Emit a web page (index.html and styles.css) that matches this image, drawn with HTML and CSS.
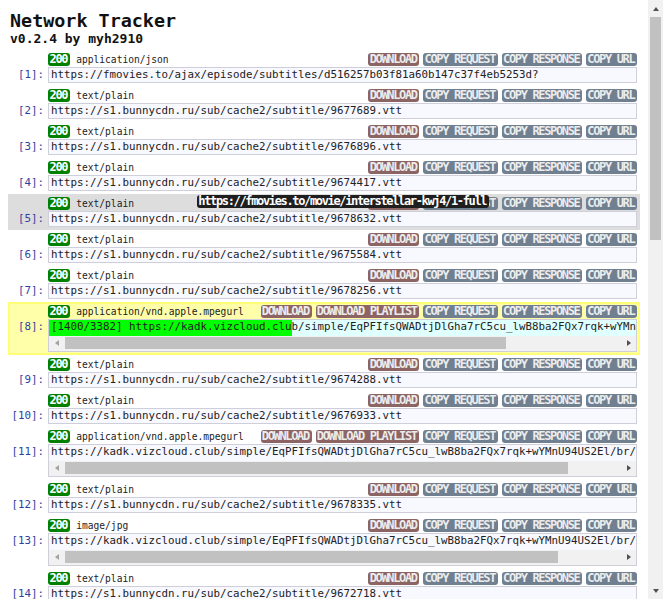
FILE: index.html
```html
<!DOCTYPE html>
<html>
<head>
<meta charset="utf-8">
<title>Network Tracker</title>
<link rel="stylesheet" href="styles.css">
</head>
<body>
<div class="page">
<h1 class="title">Network Tracker</h1>
<div class="ver">v0.2.4 by myh2910</div>
<div class="list">

<div class="row">
  <div class="head"><span class="badge">200</span><span class="type">application/json</span><span class="actions"><span class="btn dl">DOWNLOAD</span><span class="btn cp">COPY REQUEST</span><span class="btn cp">COPY RESPONSE</span><span class="btn cp">COPY URL</span></span></div>
  <div class="idx">[1]:</div>
  <div class="url">https://fmovies.to/ajax/episode/subtitles/d516257b03f81a60b147c37f4eb5253d?</div>
</div>

<div class="row">
  <div class="head"><span class="badge">200</span><span class="type">text/plain</span><span class="actions"><span class="btn dl">DOWNLOAD</span><span class="btn cp">COPY REQUEST</span><span class="btn cp">COPY RESPONSE</span><span class="btn cp">COPY URL</span></span></div>
  <div class="idx">[2]:</div>
  <div class="url">https://s1.bunnycdn.ru/sub/cache2/subtitle/9677689.vtt</div>
</div>

<div class="row">
  <div class="head"><span class="badge">200</span><span class="type">text/plain</span><span class="actions"><span class="btn dl">DOWNLOAD</span><span class="btn cp">COPY REQUEST</span><span class="btn cp">COPY RESPONSE</span><span class="btn cp">COPY URL</span></span></div>
  <div class="idx">[3]:</div>
  <div class="url">https://s1.bunnycdn.ru/sub/cache2/subtitle/9676896.vtt</div>
</div>

<div class="row">
  <div class="head"><span class="badge">200</span><span class="type">text/plain</span><span class="actions"><span class="btn dl">DOWNLOAD</span><span class="btn cp">COPY REQUEST</span><span class="btn cp">COPY RESPONSE</span><span class="btn cp">COPY URL</span></span></div>
  <div class="idx">[4]:</div>
  <div class="url">https://s1.bunnycdn.ru/sub/cache2/subtitle/9674417.vtt</div>
</div>

<div class="row hover">
  <div class="head"><span class="badge">200</span><span class="type">text/plain</span><span class="actions"><span class="btn dl">DOWNLOAD</span><span class="btn cp">COPY REQUEST</span><span class="btn cp">COPY RESPONSE</span><span class="btn cp">COPY URL</span></span></div>
  <div class="idx">[5]:</div>
  <div class="url">https://s1.bunnycdn.ru/sub/cache2/subtitle/9678632.vtt</div>
  <div class="tip">https://fmovies.to/movie/interstellar-kwj4/1-full</div>
</div>

<div class="row">
  <div class="head"><span class="badge">200</span><span class="type">text/plain</span><span class="actions"><span class="btn dl">DOWNLOAD</span><span class="btn cp">COPY REQUEST</span><span class="btn cp">COPY RESPONSE</span><span class="btn cp">COPY URL</span></span></div>
  <div class="idx">[6]:</div>
  <div class="url">https://s1.bunnycdn.ru/sub/cache2/subtitle/9675584.vtt</div>
</div>

<div class="row">
  <div class="head"><span class="badge">200</span><span class="type">text/plain</span><span class="actions"><span class="btn dl">DOWNLOAD</span><span class="btn cp">COPY REQUEST</span><span class="btn cp">COPY RESPONSE</span><span class="btn cp">COPY URL</span></span></div>
  <div class="idx">[7]:</div>
  <div class="url">https://s1.bunnycdn.ru/sub/cache2/subtitle/9678256.vtt</div>
</div>

<div class="row active">
  <div class="head"><span class="badge">200</span><span class="type">application/vnd.apple.mpegurl</span><span class="actions"><span class="btn dl">DOWNLOAD</span><span class="btn dl">DOWNLOAD PLAYLIST</span><span class="btn cp">COPY REQUEST</span><span class="btn cp">COPY RESPONSE</span><span class="btn cp">COPY URL</span></span></div>
  <div class="idx">[8]:</div>
  <div class="url scroll">
    <div class="line progress" style="--p: 41.4%">[1400/3382] https://kadk.vizcloud.club/simple/EqPFIfsQWADtjDlGha7rC5cu_lwB8ba2FQx7rqk+wYMnU94US2El/br/H4/list.m3u8</div>
    <div class="hbar"><span class="arr left"></span><span class="track"><span class="thumb" style="width: 79.3%"></span></span><span class="arr right"></span></div>
  </div>
</div>

<div class="row">
  <div class="head"><span class="badge">200</span><span class="type">text/plain</span><span class="actions"><span class="btn dl">DOWNLOAD</span><span class="btn cp">COPY REQUEST</span><span class="btn cp">COPY RESPONSE</span><span class="btn cp">COPY URL</span></span></div>
  <div class="idx">[9]:</div>
  <div class="url">https://s1.bunnycdn.ru/sub/cache2/subtitle/9674288.vtt</div>
</div>

<div class="row">
  <div class="head"><span class="badge">200</span><span class="type">text/plain</span><span class="actions"><span class="btn dl">DOWNLOAD</span><span class="btn cp">COPY REQUEST</span><span class="btn cp">COPY RESPONSE</span><span class="btn cp">COPY URL</span></span></div>
  <div class="idx">[10]:</div>
  <div class="url">https://s1.bunnycdn.ru/sub/cache2/subtitle/9676933.vtt</div>
</div>

<div class="row">
  <div class="head"><span class="badge">200</span><span class="type">application/vnd.apple.mpegurl</span><span class="actions"><span class="btn dl">DOWNLOAD</span><span class="btn dl">DOWNLOAD PLAYLIST</span><span class="btn cp">COPY REQUEST</span><span class="btn cp">COPY RESPONSE</span><span class="btn cp">COPY URL</span></span></div>
  <div class="idx">[11]:</div>
  <div class="url scroll">
    <div class="line">https://kadk.vizcloud.club/simple/EqPFIfsQWADtjDlGha7rC5cu_lwB8ba2FQx7rqk+wYMnU94US2El/br/H4/list.m3u8</div>
    <div class="hbar"><span class="arr left"></span><span class="track"><span class="thumb" style="width: 90.5%"></span></span><span class="arr right"></span></div>
  </div>
</div>

<div class="row">
  <div class="head"><span class="badge">200</span><span class="type">text/plain</span><span class="actions"><span class="btn dl">DOWNLOAD</span><span class="btn cp">COPY REQUEST</span><span class="btn cp">COPY RESPONSE</span><span class="btn cp">COPY URL</span></span></div>
  <div class="idx">[12]:</div>
  <div class="url">https://s1.bunnycdn.ru/sub/cache2/subtitle/9678335.vtt</div>
</div>

<div class="row">
  <div class="head"><span class="badge">200</span><span class="type">image/jpg</span><span class="actions"><span class="btn dl">DOWNLOAD</span><span class="btn cp">COPY REQUEST</span><span class="btn cp">COPY RESPONSE</span><span class="btn cp">COPY URL</span></span></div>
  <div class="idx">[13]:</div>
  <div class="url scroll">
    <div class="line">https://kadk.vizcloud.club/simple/EqPFIfsQWADtjDlGha7rC5cu_lwB8ba2FQx7rqk+wYMnU94US2El/br/H4/1/img-00.jpg</div>
    <div class="hbar"><span class="arr left"></span><span class="track"><span class="thumb" style="width: 88.7%"></span></span><span class="arr right"></span></div>
  </div>
</div>

<div class="row">
  <div class="head"><span class="badge">200</span><span class="type">text/plain</span><span class="actions"><span class="btn dl">DOWNLOAD</span><span class="btn cp">COPY REQUEST</span><span class="btn cp">COPY RESPONSE</span><span class="btn cp">COPY URL</span></span></div>
  <div class="idx">[14]:</div>
  <div class="url">https://s1.bunnycdn.ru/sub/cache2/subtitle/9672718.vtt</div>
</div>

<div class="row">
  <div class="head"><span class="badge">200</span><span class="type">text/plain</span><span class="actions"><span class="btn dl">DOWNLOAD</span><span class="btn cp">COPY REQUEST</span><span class="btn cp">COPY RESPONSE</span><span class="btn cp">COPY URL</span></span></div>
  <div class="idx">[15]:</div>
  <div class="url">https://s1.bunnycdn.ru/sub/cache2/subtitle/9673301.vtt</div>
</div>

</div>
</div>
<div class="vscroll">
  <span class="varr up"></span>
  <span class="vtrack"><span class="vthumb"></span></span>
  <span class="varr down"></span>
</div>
</body>
</html>
```
FILE: styles.css
```css
html, body {
  background: #fff;
}
body {
  margin: 0;
  height: 100vh;
  display: flex;
  overflow: hidden;
  font-family: "DejaVu Sans Mono", monospace;
  color: #111;
}
.page {
  flex: 1;
  min-width: 0;
  padding: 8px;
  overflow: hidden;
}
.title {
  margin: 0;
  padding: 1.5px 0 0 2px;
  font-size: 18.4px;
  line-height: 21.4px;
  font-weight: bold;
}
.ver {
  padding-left: 2px;
  font-size: 13px;
  line-height: 15px;
  font-weight: bold;
}
.list {
  margin-top: 4px;
}
.row {
  display: grid;
  grid-template-columns: 40px minmax(0, 1fr);
  grid-template-rows: 14px auto;
  grid-template-areas: ". head" "idx url";
  padding: 3px 3px 3px 0;
}
.row.hover {
  position: relative;
  background: #dddddd;
}
.row.active {
  background: #ffffaa;
  box-shadow: inset 0 0 0 2px #ffff77;
}
.head {
  grid-area: head;
  display: flex;
  align-items: flex-start;
  height: 14px;
}
.badge,
.btn,
.tip {
  font-size: 12px;
  font-weight: bold;
  letter-spacing: -1.35px;
  height: 13px;
  line-height: 13px;
  border-radius: 3px;
  white-space: nowrap;
}
.badge {
  background: #008000;
  color: #fff;
  padding: 0 3px 0 1.6px;
}
.type {
  font-size: 9.6px;
  line-height: 13px;
  color: #222;
  margin-left: 6px;
}
.actions {
  margin-left: auto;
  display: flex;
  gap: 4px;
}
.btn {
  color: #ececec;
  padding: 0 2.65px 0 1.3px;
}
.btn.dl {
  background: #8c6464;
}
.btn.cp {
  background: #708090;
}
.idx {
  grid-area: idx;
  text-align: right;
  padding-right: 4px;
  padding-top: 1px;
  font-size: 10.8px;
  line-height: 14px;
  color: #303f9f;
}
.url {
  grid-area: url;
  border: 1px solid #cfcfdc;
  background: #f8f8ff;
  padding: 0 2px;
  font-size: 10.8px;
  line-height: 14px;
  color: #222;
  white-space: nowrap;
  overflow: hidden;
}
.url.scroll {
  padding: 0;
  display: flex;
  flex-direction: column;
}
.line {
  padding: 0 2px 2px;
  overflow: hidden;
  white-space: nowrap;
}
.row.active .url {
  background: #e0ffff;
}
.line.progress {
  background: linear-gradient(to right, #00ff00 var(--p), #e0ffff var(--p));
}
.hbar {
  display: flex;
  height: 15px;
  background: #f1f1f1;
}
.arr {
  width: 15px;
  flex: none;
  display: flex;
  align-items: center;
  justify-content: center;
}
.arr::before {
  content: "";
  border-top: 3.5px solid transparent;
  border-bottom: 3.5px solid transparent;
}
.arr.left::before {
  border-right: 4px solid #a3a3a3;
}
.arr.right::before {
  border-left: 4px solid #505050;
}
.track {
  flex: 1;
  display: flex;
  padding: 1px 0 2px 1px;
}
.thumb {
  background: #c1c1c1;
}
.tip {
  position: absolute;
  left: 189px;
  top: 1px;
  z-index: 2;
  background: #1e1e1e;
  color: #fff;
  padding: 0 2.65px 0 1.3px;
}
.vscroll {
  width: 15px;
  flex: none;
  background: #f1f1f1;
  display: flex;
  flex-direction: column;
}
.varr {
  height: 17px;
  flex: none;
  display: flex;
  align-items: center;
  justify-content: center;
}
.varr::before {
  content: "";
  border-left: 3.5px solid transparent;
  border-right: 3.5px solid transparent;
}
.varr.up::before {
  border-bottom: 4px solid #505050;
}
.varr.down::before {
  border-top: 4px solid #505050;
}
.vtrack {
  flex: 1;
  padding: 0 2px;
}
.vthumb {
  display: block;
  height: 223px;
  background: #c1c1c1;
}
```
